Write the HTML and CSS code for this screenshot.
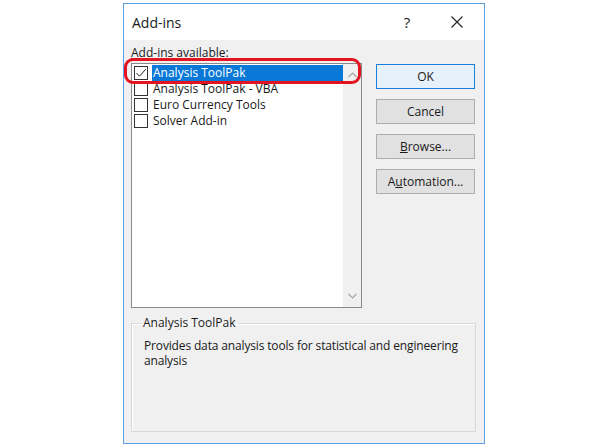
FILE: index.html
```html
<!DOCTYPE html>
<html lang="en">
<head>
  <meta charset="UTF-8">
  <meta name="viewport" content="width=device-width, initial-scale=1.0">
  <title>Add-ins</title>
  <link rel="stylesheet" href="styles.css">
</head>
<body>
  <div class="dialog">
    <div class="titlebar">
      <span class="title">Add-ins</span>
      <span class="title-btn help">?</span>
      <span class="title-btn close">
        <svg width="12" height="12" viewBox="0 0 12 12"><path d="M0.5 0.5 L11.5 11.5 M11.5 0.5 L0.5 11.5" stroke="#222" stroke-width="1.1" fill="none"/></svg>
      </span>
    </div>

    <div class="content">
      <div class="main">
        <div class="left">
          <div class="caption"><u>A</u>dd-ins available:</div>
          <div class="listbox">
            <div class="rows">
              <div class="row">
                <span class="check on">
                  <svg width="12" height="12" viewBox="0 0 12 12"><path d="M1.5 6 L4.5 9.2 L10.8 2.2" stroke="#222" stroke-width="1" fill="none"/></svg>
                </span>
                <span class="name selected">Analysis ToolPak</span>
              </div>
              <div class="row"><span class="check"></span><span class="name">Analysis ToolPak - VBA</span></div>
              <div class="row"><span class="check"></span><span class="name">Euro Currency Tools</span></div>
              <div class="row"><span class="check"></span><span class="name">Solver Add-in</span></div>
            </div>
            <div class="scrollbar">
              <svg width="9" height="6" viewBox="0 0 9 6"><path d="M0.5 5 L4.5 1 L8.5 5" stroke="#a6a6a6" stroke-width="1.2" fill="none"/></svg>
              <svg width="9" height="6" viewBox="0 0 9 6"><path d="M0.5 1 L4.5 5 L8.5 1" stroke="#a6a6a6" stroke-width="1.2" fill="none"/></svg>
            </div>
          </div>
        </div>
        <div class="buttons">
          <button class="default">OK</button>
          <button>Cancel</button>
          <button><u>B</u>rowse...</button>
          <button>A<u>u</u>tomation...</button>
        </div>
      </div>

      <fieldset class="info">
        <legend>Analysis ToolPak</legend>
        <p>Provides data analysis tools for statistical and engineering analysis</p>
      </fieldset>
    </div>

    <div class="highlight"></div>
  </div>
</body>
</html>
```

FILE: styles.css
```css
* {
  margin: 0;
  padding: 0;
  box-sizing: border-box;
  font-family: 'Open Sans', 'Noto Sans', sans-serif;
}
body {
  background: #fff;
  color: #1a1a1a;
}
.dialog {
  position: relative;
  width: 362px;
  height: 441px;
  margin: 3px 0 0 123px;
  border: 1px solid #5c9fe6;
  background: #f0f0f0;
  display: flex;
  flex-direction: column;
}
.titlebar {
  height: 36px;
  background: #fff;
  display: flex;
  align-items: center;
  padding-left: 8px;
}
.title {
  font-size: 14px;
  flex: 1;
}
.title-btn {
  width: 46px;
  height: 36px;
  display: flex;
  align-items: center;
  justify-content: center;
  font-size: 15px;
}
.help {
  margin-right: 4px;
}
.close {
  margin-right: 4px;
}
.content {
  padding: 5px 8px 0 7px;
  flex: 1;
  display: flex;
  flex-direction: column;
}
.main {
  display: flex;
  gap: 14px;
}
.left {
  width: 231px;
}
.caption {
  font-size: 12px;
  line-height: 16px;
  height: 18px;
}
.listbox {
  height: 245px;
  background: #fff;
  border: 1px solid #8a8a8a;
  display: flex;
}
.rows {
  flex: 1;
  padding: 1px 0 0 2px;
}
.row {
  display: flex;
  align-items: center;
  height: 16px;
}
.check {
  width: 14px;
  height: 14px;
  border: 1px solid #333;
  background: #fff;
  display: flex;
  align-items: center;
  justify-content: center;
  margin-right: 4px;
}
.name {
  font-size: 12px;
  line-height: 16px;
  padding-left: 1px;
  flex: 1;
}
.name.selected {
  background: #0a78d7;
  color: #fff;
}
.scrollbar {
  width: 18px;
  background: #f0f0f0;
  display: flex;
  flex-direction: column;
  justify-content: space-between;
  align-items: center;
  padding: 8px 0 8px;
}
.buttons {
  display: flex;
  flex-direction: column;
  gap: 10px;
  padding-top: 19px;
}
.buttons button {
  width: 99px;
  height: 25px;
  background: #e1e1e1;
  border: 1px solid #adadad;
  font-size: 12px;
  color: #1a1a1a;
}
.buttons button.default {
  background: #e5f1fb;
  border: 1px solid #1a7fd9;
}
.info {
  margin-top: 8px;
  height: 116px;
  width: 345px;
  border: 1px solid #d8d8d8;
  box-shadow: inset 1px 1px 0 #fff;
  padding: 4px 2px 0 12px;
}
.info legend {
  font-size: 12px;
  padding: 0 2px;
  margin-left: -3px;
  line-height: 14px;
}
.info p {
  font-size: 12px;
  line-height: 15px;
  margin-top: 4px;
  letter-spacing: -0.15px;
}
.highlight {
  position: absolute;
  left: 0;
  top: 54px;
  width: 237px;
  height: 26px;
  border: 3px solid #e3141f;
  border-radius: 9px;
}
```
